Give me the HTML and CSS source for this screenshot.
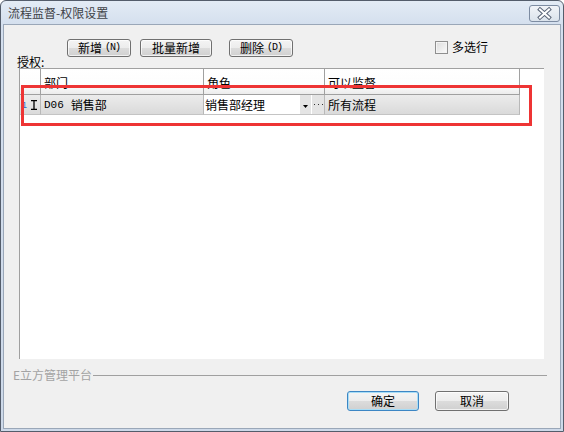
FILE: index.html
```html
<!DOCTYPE html>
<html lang="zh">
<head>
<meta charset="utf-8">
<title>流程监督-权限设置</title>
<link rel="stylesheet" href="styles.css">
</head>
<body>
<div class="window">
  <div class="titlebar">
    <span class="title">流程监督-权限设置</span>
    <span class="close">
      <svg width="31" height="17" viewBox="0 0 31 17">
        <path d="M11 4.5 L20 12.5 M20 4.5 L11 12.5" stroke="#5b6678" stroke-width="4" stroke-linecap="square" fill="none"/>
        <path d="M11 4.5 L20 12.5 M20 4.5 L11 12.5" stroke="#ffffff" stroke-width="2" stroke-linecap="square" fill="none"/>
      </svg>
    </span>
  </div>
  <div class="client">
    <div class="toolbar">
      <span class="label">授权:</span>
      <span class="btn btn-add">新增<span class="acc">(N)</span></span>
      <span class="btn btn-batch">批量新增</span>
      <span class="btn btn-del">删除<span class="acc">(D)</span></span>
      <label class="multi"><span class="check"></span>多选行</label>
    </div>
    <div class="table">
      <div class="grid">
        <div class="hcell"></div>
        <div class="hcell">部门</div>
        <div class="hcell">角色</div>
        <div class="hcell">可以监督</div>
        <div class="hfill"></div>

        <div class="cell rownum"><span class="num">1</span>
          <svg class="ibeam" width="6" height="10" viewBox="0 0 6 10">
            <path d="M0 0.5 H6 M0 9.5 H6 M3 0 V10" stroke="#000" stroke-width="1.3" fill="none"/>
          </svg>
        </div>
        <div class="cell"><span class="code">D06</span>销售部</div>
        <div class="cell edit">
          <span class="edit-text">销售部经理</span>
          <span class="mini drop"><svg width="5" height="3" viewBox="0 0 5 3"><path d="M0 0 H5 L2.5 3 Z" fill="#000"/></svg></span>
          <span class="mini dots"><svg width="9" height="2" viewBox="0 0 9 2"><rect x="0" y="0" width="1" height="1" fill="#333"/><rect x="4" y="0" width="1" height="1" fill="#333"/><rect x="8" y="0" width="1" height="1" fill="#333"/></svg></span>
        </div>
        <div class="cell">所有流程</div>
        <div class="rfill"></div>
      </div>
    </div>
    <div class="separator"><span class="sep-text">E立方管理平台</span><span class="sep-line"></span></div>
    <div class="footer">
      <span class="btn btn-ok">确定</span>
      <span class="btn btn-cancel">取消</span>
    </div>
  </div>
  <div class="annotation"></div>
</div>
</body>
</html>
```
FILE: styles.css
```css
* { box-sizing: border-box; }
html, body { margin: 0; padding: 0; }
body {
  width: 564px;
  height: 432px;
  font-family: "Noto Sans CJK SC", "Liberation Sans", sans-serif;
  font-size: 12px;
  line-height: 14px;
  color: #000;
  background: #ffffff;
}
.window {
  position: relative;
  width: 564px;
  height: 432px;
  border: 1px solid #545d6b;
  border-radius: 6px 6px 0 0;
  background: linear-gradient(#e3ebf5, #d4dfee 24px, #cdd9e9);
  padding: 0 2px 2px 2px;
  display: flex;
  flex-direction: column;
}
.titlebar {
  height: 23px;
  display: flex;
  align-items: center;
  justify-content: space-between;
  padding: 0 1px 0 5px;
}
.title {
  color: #3f4247;
  font-size: 12px;
  line-height: 14px;
  margin-top: 1px;
}
.close {
  width: 31px;
  height: 17px;
  margin-top: 2px;
  border: 1px solid #7d8ca2;
  border-radius: 3px;
  background: linear-gradient(#f1f4f8, #dbe3ec);
  display: flex;
  align-items: center;
  justify-content: center;
  overflow: hidden;
}
.close svg { display: block; margin: -1px; }
.client {
  flex: 1;
  background: #f0f0f0;
  border: 1px solid #9aa7b8;
  display: flex;
  flex-direction: column;
}
.toolbar {
  height: 43px;
  display: flex;
  align-items: flex-start;
  padding-left: 13px;
}
.label {
  align-self: flex-end;
  width: 50px;
  margin-bottom: -1px;
  line-height: 14px;
}
.btn {
  display: flex;
  align-items: center;
  justify-content: center;
  height: 18px;
  border: 1px solid #707070;
  border-radius: 3px;
  background: linear-gradient(#f4f4f4, #ececec 50%, #dcdcdc 50%, #d0d0d0);
  box-shadow: inset 0 0 0 1px rgba(255,255,255,0.7);
  font-size: 12px;
  line-height: 14px;
  white-space: nowrap;
}
.acc {
  font-family: "Liberation Mono", monospace;
  font-size: 10px;
  margin-left: 3px;
  letter-spacing: -1px;
}
.btn-add { margin-top: 14px; width: 64px; }
.btn-batch { margin-top: 14px; width: 72px; margin-left: 9px; }
.btn-del { margin-top: 14px; width: 64px; margin-left: 17px; }
.multi {
  margin-top: 15px;
  margin-left: 142px;
  display: flex;
  align-items: center;
  gap: 4px;
}
.check {
  width: 13px;
  height: 13px;
  border: 1px solid #8f8f8f;
  background: linear-gradient(135deg, #dcdcdc, #fbfbfb);
  box-shadow: inset 0 0 0 1px #f4f4f4;
}
.table {
  margin-left: 15px;
  width: 525px;
  height: 291px;
  background: #fff;
  border-top: 1px solid #a0a0a0;
  border-left: 1px solid #a0a0a0;
}
.grid {
  display: grid;
  grid-template-columns: 21px 163px 121px 195px 1fr;
  grid-template-rows: 26px 20px;
}
.hcell {
  border-right: 1px solid #a0a0a0;
  border-bottom: 1px solid #a0a0a0;
  background: linear-gradient(#ffffff, #fdfdfd 65%, #ececec);
  padding: 7px 0 0 3px;
  color: #000;
}
.hfill { background: #fff; }
.cell {
  border-right: 1px solid #b8b8b8;
  border-bottom: 1px solid #c4c4c4;
  background: linear-gradient(#ececec, #dadada);
  display: flex;
  align-items: center;
  padding-left: 3px;
  white-space: nowrap;
}
.rownum { padding-left: 2px; gap: 4px; }
.num {
  font-family: "Liberation Sans", sans-serif;
  font-size: 9px;
  color: #2f6fcc;
}
.ibeam { display: block; }
.code {
  font-family: "Liberation Mono", monospace;
  font-size: 11px;
  margin-right: 7px;
}
.edit {
  background: #fff;
  padding-left: 1px;
  padding-right: 0;
}
.edit-text { flex: 1; }
.mini {
  width: 11px;
  height: 19px;
  background: #e4e4e4;
  display: flex;
  align-items: center;
  justify-content: center;
}
.mini.drop svg { margin-top: 3px; }
.mini.dots { width: 12px; margin-left: 1px; }
.mini.dots svg { margin-top: 1px; }
.rfill { background: #fff; }
.separator {
  margin-top: 9px;
  padding: 0 13px 0 9px;
  display: flex;
  align-items: center;
  height: 14px;
}
.sep-text {
  color: #a3a3a3;
  white-space: nowrap;
}
.sep-line {
  flex: 1;
  height: 1px;
  background: #a0a0a0;
  margin-left: 1px;
}
.footer {
  margin-top: 9px;
  display: flex;
  justify-content: flex-end;
  gap: 16px;
  padding-right: 51px;
}
.btn-ok, .btn-cancel { height: 20px; width: 72px; }
.btn-cancel { width: 74px; }
.btn-ok {
  border-color: #3c86c4;
  box-shadow: inset 0 0 0 1px #a8ddf6;
}
.annotation {
  position: absolute;
  left: 20px;
  top: 84px;
  width: 511px;
  height: 41px;
  border: 3px solid #ee3434;
  pointer-events: none;
}
```
